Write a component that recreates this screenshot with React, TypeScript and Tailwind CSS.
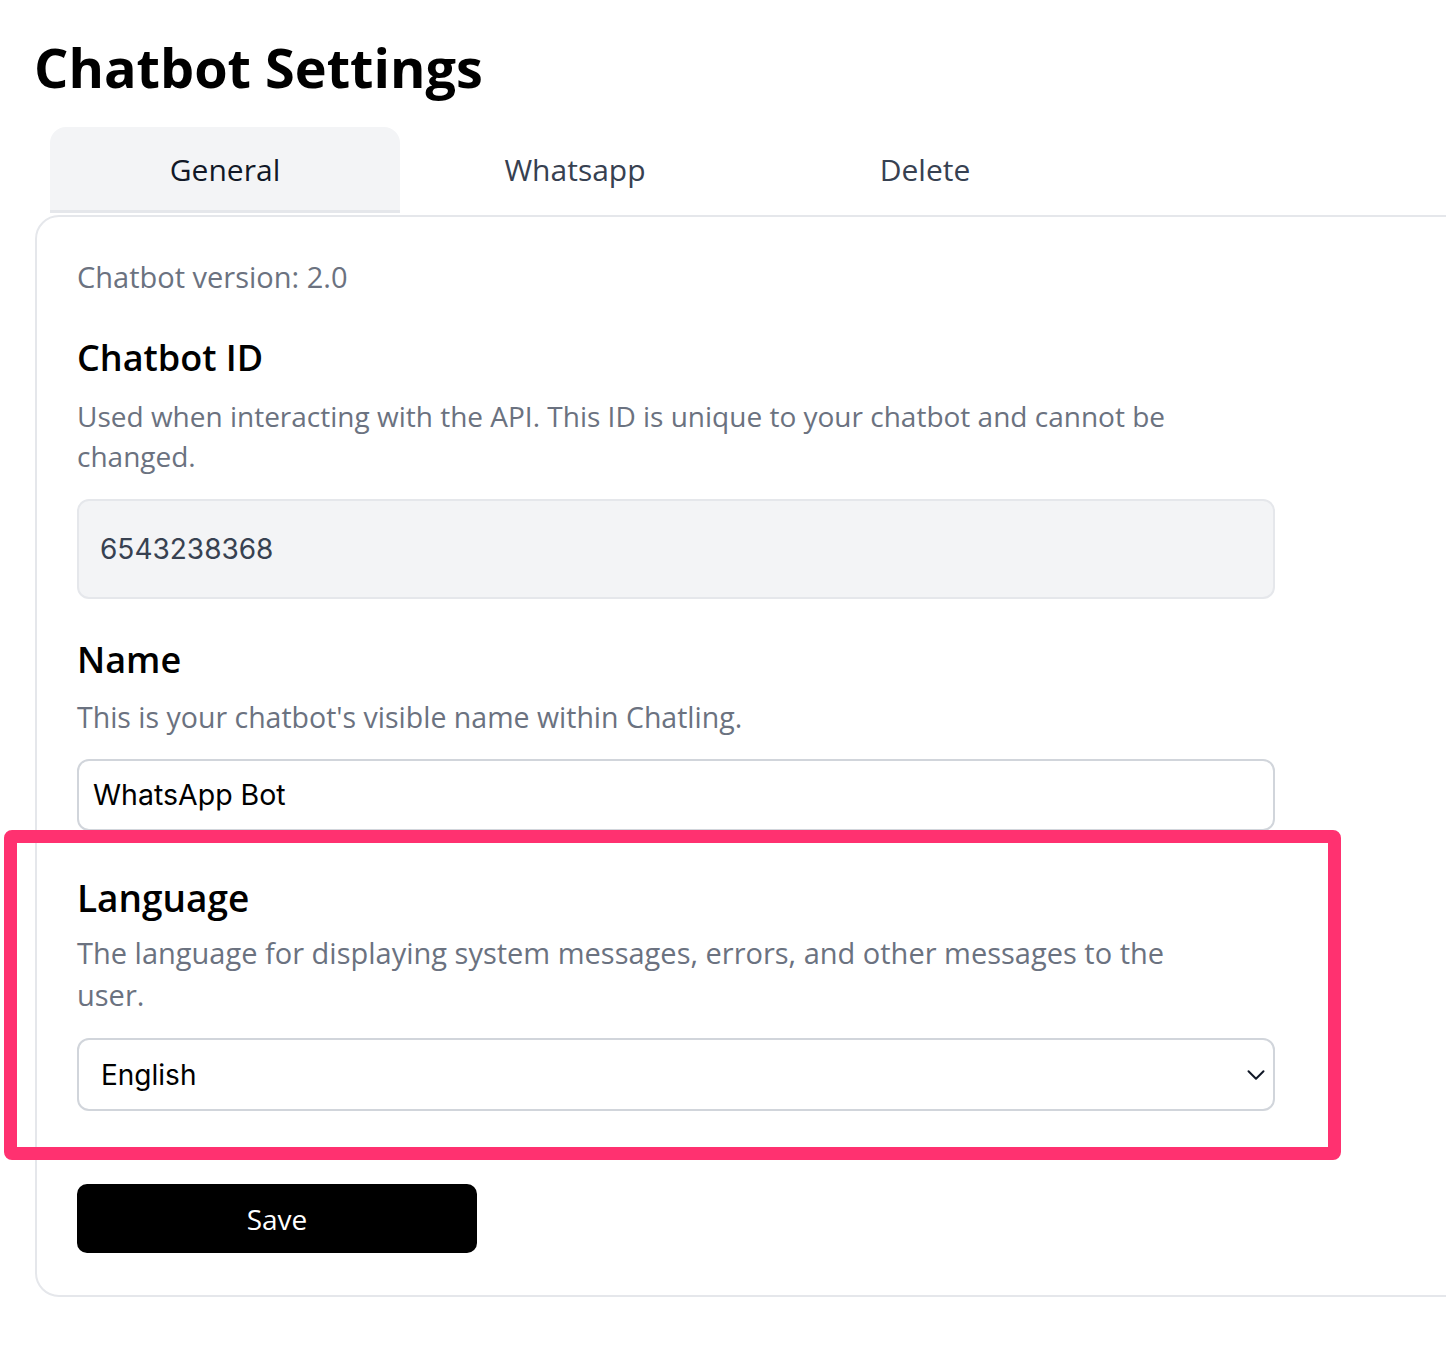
import React from "react";

function ChevronDown() {
  return (
    <svg width="30" height="30" viewBox="0 0 24 24" fill="none" stroke="#111827" strokeWidth="1.6" strokeLinecap="round" strokeLinejoin="round">
      <path d="m6 9 6 6 6-6" />
    </svg>
  );
}

export default function App() {
  return (
    <div className="relative min-h-[1366px] w-full overflow-hidden bg-white pl-[35px] pt-[32px] font-['Open_Sans',_'Noto_Sans',_sans-serif]">
      <h1 className="-ml-[1px] text-[54px] font-bold leading-[70px] text-black">Chatbot Settings</h1>

      <div className="ml-[15px] mt-[25px] flex">
        <div className="flex h-[86px] w-[350px] items-center justify-center rounded-t-[16px] border-b-[3px] border-[#e5e7eb] bg-[#f3f4f6] pt-[1px] text-[30px] font-medium text-[#111827]">
          General
        </div>
        <div className="flex h-[86px] w-[350px] items-center justify-center pb-[2px] text-[30px] font-medium text-[#374151]">
          Whatsapp
        </div>
        <div className="flex h-[86px] w-[350px] items-center justify-center pb-[2px] text-[30px] font-medium text-[#374151]">
          Delete
        </div>
      </div>

      <div className="mt-[2px] w-[1460px] rounded-tl-[24px] rounded-bl-[24px] border-2 border-[#e5e7eb] pb-[42px] pl-[40px] pt-[40px]">
        <div className="w-[1198px]">
          <p className="text-[29px] leading-[40px] text-[#6b7280]">Chatbot version: 2.0</p>

          <h2 className="mt-[37px] text-[36px] font-semibold leading-[48px] text-black">Chatbot ID</h2>
          <p className="mt-[14px] max-w-[1110px] text-[28px] leading-[40px] text-[#6b7280]">
            Used when interacting with the API. This ID is unique to your chatbot and cannot be changed.
          </p>
          <div className="mt-[23px] flex h-[100px] items-center rounded-[12px] border-2 border-[#e5e7eb] bg-[#f3f4f6] pl-[21px] font-['Inter',_sans-serif] text-[28px] text-[#374151]">
            6543238368
          </div>

          <h2 className="mt-[37px] text-[36px] font-semibold leading-[48px] text-black">Name</h2>
          <p className="mt-[13px] max-w-[1110px] text-[28.5px] leading-[40px] text-[#6b7280]">
            This is your chatbot's visible name within Chatling.
          </p>
          <div className="mt-[22px] flex h-[72px] items-center rounded-[12px] border-2 border-[#d1d5db] bg-white pl-[14px] font-['Inter',_sans-serif] text-[28.5px] text-black">
            WhatsApp Bot
          </div>

          <h2 className="mt-[43px] text-[37px] font-semibold leading-[48px] text-black">Language</h2>
          <p className="mt-[10px] max-w-[1110px] text-[29px] leading-[42px] text-[#6b7280]">
            The language for displaying system messages, errors, and other messages to the user.
          </p>
          <div className="mt-[22px] flex h-[73px] items-center justify-between rounded-[12px] border-2 border-[#d1d5db] bg-white pl-[22px] pr-[2px] font-['Inter',_sans-serif] text-[28px] text-black">
            <span>English</span>
            <ChevronDown />
          </div>

          <button className="mt-[73px] flex h-[69px] w-[400px] items-center justify-center rounded-[10px] bg-black text-[28px] font-medium text-white">
            Save
          </button>
        </div>
      </div>

      <div className="pointer-events-none absolute left-[4px] top-[830px] h-[330px] w-[1337px] rounded-[8px] border-[13px] border-[#ff3170]" />
    </div>
  );
}
